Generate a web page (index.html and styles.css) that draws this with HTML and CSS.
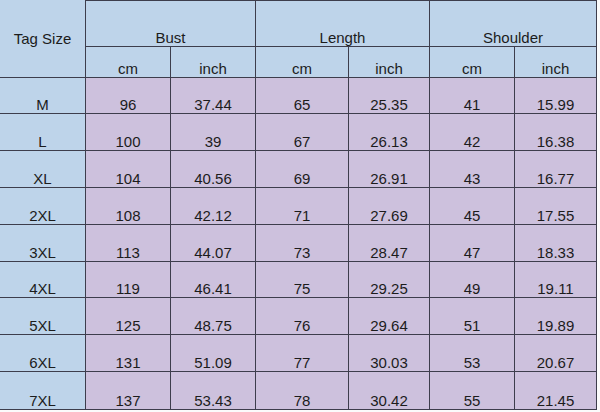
FILE: index.html
```html
<!DOCTYPE html>
<html>
<head>
<meta charset="utf-8">
<link rel="stylesheet" href="styles.css">
</head>
<body>
<div class="chart">
  <div class="cell head tag">Tag Size</div>
  <div class="cell head group">Bust</div>
  <div class="cell head group">Length</div>
  <div class="cell head group">Shoulder</div>
  <div class="cell head">cm</div><div class="cell head">inch</div>
  <div class="cell head">cm</div><div class="cell head">inch</div>
  <div class="cell head">cm</div><div class="cell head">inch</div>

  <div class="cell head">M</div><div class="cell">96</div><div class="cell">37.44</div><div class="cell">65</div><div class="cell">25.35</div><div class="cell">41</div><div class="cell">15.99</div>
  <div class="cell head">L</div><div class="cell">100</div><div class="cell">39</div><div class="cell">67</div><div class="cell">26.13</div><div class="cell">42</div><div class="cell">16.38</div>
  <div class="cell head">XL</div><div class="cell">104</div><div class="cell">40.56</div><div class="cell">69</div><div class="cell">26.91</div><div class="cell">43</div><div class="cell">16.77</div>
  <div class="cell head">2XL</div><div class="cell">108</div><div class="cell">42.12</div><div class="cell">71</div><div class="cell">27.69</div><div class="cell">45</div><div class="cell">17.55</div>
  <div class="cell head">3XL</div><div class="cell">113</div><div class="cell">44.07</div><div class="cell">73</div><div class="cell">28.47</div><div class="cell">47</div><div class="cell">18.33</div>
  <div class="cell head">4XL</div><div class="cell">119</div><div class="cell">46.41</div><div class="cell">75</div><div class="cell">29.25</div><div class="cell">49</div><div class="cell">19.11</div>
  <div class="cell head">5XL</div><div class="cell">125</div><div class="cell">48.75</div><div class="cell">76</div><div class="cell">29.64</div><div class="cell">51</div><div class="cell">19.89</div>
  <div class="cell head">6XL</div><div class="cell">131</div><div class="cell">51.09</div><div class="cell">77</div><div class="cell">30.03</div><div class="cell">53</div><div class="cell">20.67</div>
  <div class="cell head">7XL</div><div class="cell">137</div><div class="cell">53.43</div><div class="cell">78</div><div class="cell">30.42</div><div class="cell">55</div><div class="cell">21.45</div>
</div>
</body>
</html>
```
FILE: styles.css
```css
html, body {
  margin: 0;
  padding: 0;
  background: #fbfbfb;
}

.chart {
  display: grid;
  grid-template-columns: 85px 84px 84px 92px 80px 84px 81px;
  grid-template-rows: 45px 30px 35px 36px 36px 36px 36px 35px 36px 36px 37px;
  gap: 1px;
  width: 596px;
  padding: 1px 1px 1px 0;
  background: #3d3d4c;
  font-family: "Liberation Sans", Arial, sans-serif;
  font-size: 15px;
  line-height: 17px;
  color: #1c1c1c;
}

.cell {
  display: flex;
  align-items: flex-end;
  justify-content: center;
  background: #cdc1dd;
}

.head {
  background: #bed4ea;
}

.tag {
  grid-row: span 2;
  align-items: center;
  margin-top: -1px;
}

.group {
  grid-column: span 2;
}
```
